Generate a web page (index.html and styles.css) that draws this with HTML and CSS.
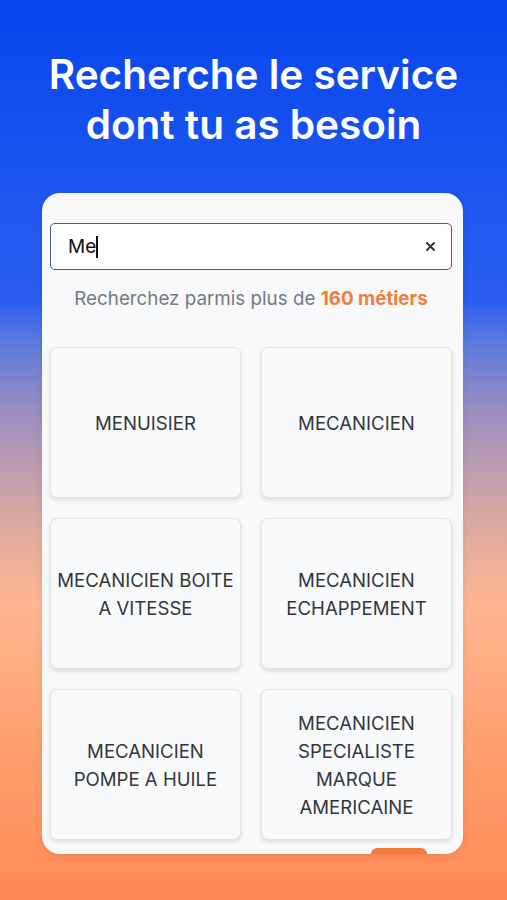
FILE: index.html
```html
<!DOCTYPE html>
<html lang="fr">

<head>
    <meta charset="UTF-8">
    <meta name="viewport" content="width=device-width, initial-scale=1.0">
    <title>Recherche le service</title>
    <link rel="stylesheet" href="styles.css">
</head>

<body>
    <h1 class="title">Recherche le service<br>dont tu as besoin</h1>

    <div class="card">
        <div class="searchBox">
            <span class="searchText">Me<span class="caret"></span></span>
            <svg class="clearIcon" width="9" height="9" viewBox="0 0 9 9">
                <path d="M1 1L8 8M8 1L1 8" stroke="#2b2f3a" stroke-width="1.8" stroke-linecap="round" />
            </svg>
        </div>
        <p class="hint">Recherchez parmis plus de <strong>160 métiers</strong></p>

        <div class="tiles">
            <div class="tile">MENUISIER</div>
            <div class="tile">MECANICIEN</div>
            <div class="tile">MECANICIEN BOITE A VITESSE</div>
            <div class="tile">MECANICIEN ECHAPPEMENT</div>
            <div class="tile">MECANICIEN POMPE A HUILE</div>
            <div class="tile">MECANICIEN SPECIALISTE MARQUE AMERICAINE</div>
        </div>

        <span class="peekButton"></span>
    </div>
</body>

</html>
```
FILE: styles.css
```css
body {
    font-family: Inter, "Noto Sans", sans-serif;
    margin: 0;
    height: 900px;
    overflow: hidden;
    background: linear-gradient(to bottom,
            #0646ee 0px,
            #2a5ef0 300px,
            #5a78e0 340px,
            #9a8ec0 412px,
            #d8a8a0 517px,
            #ffb690 603px,
            #ff9c6c 760px,
            #ff8a55 900px);
}

.title {
    margin: 0;
    padding-top: 50px;
    color: #fff;
    font-size: 40.5px;
    font-weight: 600;
    line-height: 50px;
    text-align: center;
}

.card {
    position: relative;
    width: 421px;
    box-sizing: border-box;
    margin: 43px 0 0 42px;
    padding: 30px 11px 14px 8px;
    background-color: #f8f9fb;
    border-radius: 18px;
    box-shadow: 0 2px 6px rgba(0, 0, 0, 0.08);
}

.searchBox {
    height: 47px;
    box-sizing: border-box;
    display: flex;
    align-items: center;
    justify-content: space-between;
    padding: 0 16px 0 17px;
    background-color: #fff;
    border: 1.5px solid #4a5882;
    border-radius: 5px;
}

.searchText {
    font-size: 19px;
    color: #111;
    display: flex;
    align-items: center;
}

.caret {
    display: inline-block;
    width: 1.5px;
    height: 22px;
    background-color: #111;
}

.hint {
    margin: 17px 0 36px;
    font-size: 18.8px;
    line-height: 24px;
    color: #767a82;
    text-align: center;
}

.hint strong {
    color: #ef7d3c;
    font-weight: 700;
}

.tiles {
    display: grid;
    grid-template-columns: 1fr 1fr;
    gap: 20px;
}

.tile {
    height: 151px;
    box-sizing: border-box;
    display: flex;
    align-items: center;
    justify-content: center;
    padding: 0 5px;
    text-align: center;
    font-size: 18.6px;
    line-height: 28px;
    color: #33363b;
    background-color: #f9fafc;
    border: 1px solid #e1e3e7;
    border-radius: 7px;
    box-shadow: 0 2px 4px rgba(0, 0, 0, 0.12);
}

.peekButton {
    position: absolute;
    left: 329px;
    bottom: 0;
    width: 56px;
    height: 6px;
    background-color: #f47b3e;
    border-radius: 12px 12px 0 0;
}
```
